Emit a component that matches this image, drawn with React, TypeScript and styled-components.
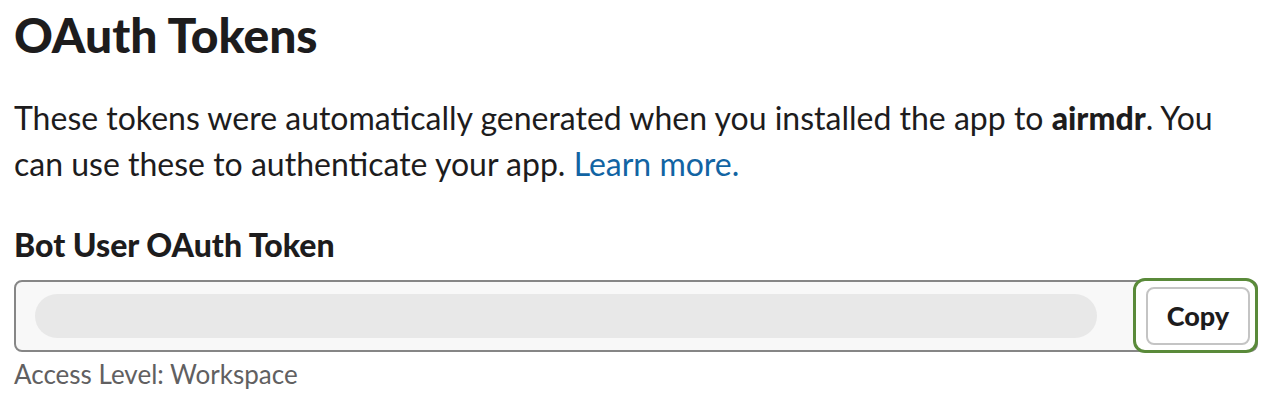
import styled, { createGlobalStyle } from "styled-components";

const GlobalStyle = createGlobalStyle`
  body {
    margin: 0;
    background: #fff;
    font-family: Lato, "Noto Sans", sans-serif;
    color: #1d1c1d;
  }
`;

const Page = styled.div`
  padding: 6px 16px 0 14px;
`;

const Title = styled.h1`
  margin: 0;
  font-size: 48px;
  line-height: 1.2;
  font-weight: 900;
`;

const Description = styled.p`
  margin: 31px 0 0;
  font-size: 32px;
  line-height: 46px;
  b {
    font-weight: 900;
  }
`;

const Link = styled.a`
  color: #1264a3;
  text-decoration: none;
`;

const Label = styled.div`
  margin-top: 38px;
  font-size: 32px;
  line-height: 40px;
  font-weight: 900;
`;

const TokenField = styled.div`
  margin-top: 15px;
  height: 72px;
  box-sizing: border-box;
  border: 2px solid #868686;
  border-radius: 8px;
  background: #f8f8f8;
  display: flex;
  align-items: center;
  padding-left: 19px;
`;

const Skeleton = styled.div`
  flex: 1;
  height: 44px;
  border-radius: 22px;
  background: #e8e8e8;
`;

const FocusRing = styled.div`
  margin: 0 -2px 0 36px;
  height: 75px;
  box-sizing: border-box;
  border: 3px solid #5a8a3a;
  border-radius: 12px;
  background: #fff;
  display: flex;
  align-items: center;
  padding: 0 5px 0 10px;
`;

const CopyButton = styled.button`
  width: 104px;
  height: 58px;
  box-sizing: border-box;
  border: 2px solid #c4c4c4;
  border-radius: 8px;
  background: #fff;
  font-family: Lato, "Noto Sans", sans-serif;
  font-size: 27px;
  font-weight: 900;
  color: #1d1c1d;
  cursor: pointer;
  padding: 0;
`;

const Hint = styled.div`
  margin-top: 5px;
  font-size: 26px;
  line-height: 34px;
  color: #616061;
`;

export default function App() {
  return (
    <>
      <GlobalStyle />
      <Page>
        <Title>OAuth Tokens</Title>
        <Description>
          These tokens were automatically generated when you installed the app
          to <b>airmdr</b>. You can use these to authenticate your app.{" "}
          <Link href="#">Learn more.</Link>
        </Description>
        <Label>Bot User OAuth Token</Label>
        <TokenField>
          <Skeleton />
          <FocusRing>
            <CopyButton>Copy</CopyButton>
          </FocusRing>
        </TokenField>
        <Hint>Access Level: Workspace</Hint>
      </Page>
    </>
  );
}
